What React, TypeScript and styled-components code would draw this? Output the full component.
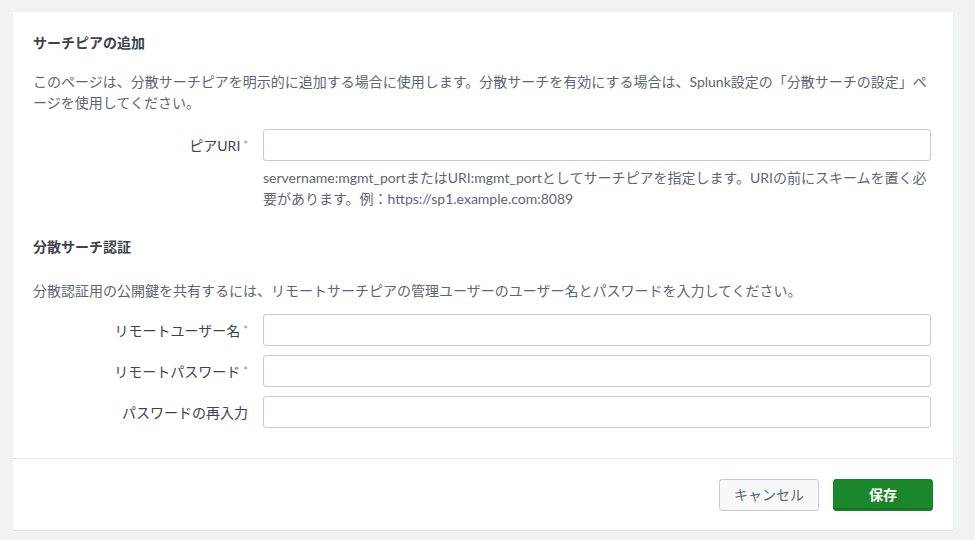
import React from 'react';
import styled, { createGlobalStyle } from 'styled-components';

const GlobalStyle = createGlobalStyle`
  html, body {
    margin: 0;
    padding: 0;
    background: #f1f2f2;
  }
  body {
    font-family: 'Lato', 'Noto Sans CJK JP', sans-serif;
    color: #3c444d;
  }
`;

const Page = styled.div`
  padding: 12px 22px 10px 13px;
`;

const Card = styled.div`
  background: #ffffff;
  box-shadow: 0 1px 1px rgba(0, 0, 0, 0.06);
`;

const Body = styled.div`
  padding: 21px 22px 30px 20px;
  border-bottom: 1px solid #e1e6eb;
`;

const SectionTitle = styled.h2<{ spaced?: boolean }>`
  margin: ${props => (props.spaced ? '28px' : '0')} 0 0;
  font-size: 14px;
  font-weight: 700;
  line-height: 20px;
  color: #3c444d;
`;

const Description = styled.p<{ tight?: boolean }>`
  margin: ${props => (props.tight ? '23px 0 13px' : '18px 0 16px')};
  font-size: 14px;
  line-height: 21px;
  color: #5c6773;
`;

const Row = styled.div`
  display: grid;
  grid-template-columns: 215px 1fr;
  column-gap: 15px;
  align-items: center;
  & + & {
    margin-top: 9px;
  }
`;

const Label = styled.label`
  text-align: right;
  font-size: 14px;
  color: #3c444d;
  white-space: nowrap;
`;

const Required = styled.span`
  color: #8a949e;
  font-size: 11px;
  margin-left: 3px;
  vertical-align: 2px;
`;

const Input = styled.input`
  box-sizing: border-box;
  width: 100%;
  height: 32px;
  border: 1px solid #c3cbd4;
  border-radius: 3px;
  background: #ffffff;
  padding: 0 10px;
  font-size: 13px;
  outline: none;
`;

const Help = styled.div`
  grid-column: 2;
  margin-top: 6px;
  font-size: 14px;
  line-height: 21px;
  color: #5c6773;
`;

const Footer = styled.div`
  display: flex;
  justify-content: flex-end;
  gap: 14px;
  padding: 20px 20px 19px;
`;

const Button = styled.button<{ primary?: boolean }>`
  box-sizing: border-box;
  width: 100px;
  height: 32px;
  padding: 0 0 2px;
  border-radius: 3px;
  font-family: inherit;
  font-size: 14px;
  cursor: pointer;
  border: 1px solid ${props => (props.primary ? '#1a7f28' : '#c3cbd4')};
  background: ${props => (props.primary ? '#1a872a' : '#f7f8fa')};
  color: ${props => (props.primary ? '#ffffff' : '#5c6773')};
  font-weight: ${props => (props.primary ? 700 : 400)};
  box-shadow: ${props => (props.primary ? 'inset 0 -2px 0 rgba(0,0,0,0.12)' : 'none')};
`;

interface FieldProps {
  label: string;
  required?: boolean;
  type?: string;
}

const Field: React.FC<FieldProps> = ({ label, required, type = 'text' }) => (
  <Row>
    <Label>
      {label}
      {required && <Required>*</Required>}
    </Label>
    <Input type={type} />
  </Row>
);

export default function App() {
  return (
    <Page>
      <GlobalStyle />
      <Card>
        <Body>
          <SectionTitle>サーチピアの追加</SectionTitle>
          <Description>
            このページは、分散サーチピアを明示的に追加する場合に使用します。分散サーチを有効にする場合は、Splunk設定の「分散サーチの設定」ページを使用してください。
          </Description>
          <Row>
            <Label>
              ピアURI<Required>*</Required>
            </Label>
            <Input type="text" />
            <Help>
              servername:mgmt_portまたはURI:mgmt_portとしてサーチピアを指定します。URIの前にスキームを置く必要があります。例：https://sp1.example.com:8089
            </Help>
          </Row>

          <SectionTitle spaced>分散サーチ認証</SectionTitle>
          <Description tight>
            分散認証用の公開鍵を共有するには、リモートサーチピアの管理ユーザーのユーザー名とパスワードを入力してください。
          </Description>
          <Field label="リモートユーザー名" required />
          <Field label="リモートパスワード" required type="password" />
          <Field label="パスワードの再入力" type="password" />
        </Body>
        <Footer>
          <Button>キャンセル</Button>
          <Button primary>保存</Button>
        </Footer>
      </Card>
    </Page>
  );
}
